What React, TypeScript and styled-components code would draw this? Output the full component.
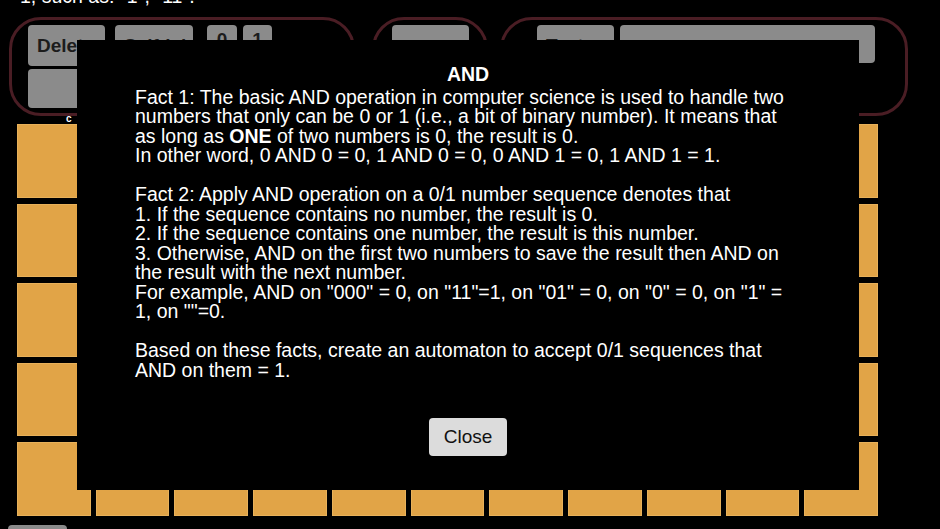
import React from "react";
import styled, { createGlobalStyle } from "styled-components";

const Global = createGlobalStyle`
  html, body {
    margin: 0;
    padding: 0;
    background: #000;
    overflow: hidden;
  }
  body {
    font-family: "Liberation Sans", Arial, Helvetica, sans-serif;
    color: #fff;
  }
`;

const Page = styled.div`
  width: 940px;
  height: 529px;
  overflow: hidden;
  position: relative;
  background: #000;
`;

const IntroRow = styled.div`
  display: flex;
  align-items: flex-end;
  margin-top: -14px;
  padding-left: 20px;
  height: 20px;
`;

const IntroText = styled.div`
  font-size: 19.5px;
  line-height: 19.5px;
  color: #fff;
  white-space: nowrap;
`;

const StubButton = styled.div`
  width: 40px;
  height: 20px;
  margin-left: 410px;
  margin-bottom: 14px;
  background: #8a8a8a;
  border-radius: 4px;
`;

const PanelRow = styled.div`
  display: flex;
  margin-top: 11px;
  padding-left: 9px;
  height: 99px;
`;

const Panel = styled.div<{ $w: number; $ml: number }>`
  box-sizing: border-box;
  width: ${(p) => p.$w}px;
  margin-left: ${(p) => p.$ml}px;
  height: 99px;
  border: 3px solid #4a1d24;
  border-radius: 32px;
  padding: 5px 0 0 ${(p) => (p.$ml === 0 ? 16 : 15)}px;
  display: flex;
  flex-direction: column;
  gap: 3px;
`;

const ButtonLine = styled.div`
  display: flex;
  gap: 8px;
`;

const GrayButton = styled.div<{ $w: number; $h: number; $ml?: number }>`
  width: ${(p) => p.$w}px;
  height: ${(p) => p.$h}px;
  margin-left: ${(p) => p.$ml ?? 0}px;
  background: #8b8b8b;
  border-radius: 4px;
  color: #1c1c1c;
  font-weight: bold;
  font-size: 19px;
  line-height: 19px;
  padding: 11px 0 0 9px;
  box-sizing: border-box;
  white-space: nowrap;
  overflow: hidden;
`;

const SmallButton = styled(GrayButton)`
  padding: 5px 0 0 0;
  text-align: center;
`;

const LabelRow = styled.div`
  height: 8px;
  padding-left: 66px;
  font-size: 10px;
  line-height: 6px;
  font-weight: bold;
  color: #fff;
`;

const Grid = styled.div`
  margin-left: 17px;
  width: 861px;
  display: grid;
  grid-template-columns: repeat(11, 1fr);
  grid-template-rows: repeat(5, 73.6px);
  column-gap: 5px;
  row-gap: 6px;
`;

const Cell = styled.div`
  background: #e1a447;
  box-shadow: inset 0 0 0 1px #e8b15a;
`;

const BottomStub = styled.div`
  margin: 9px 0 0 8px;
  width: 59px;
  height: 20px;
  background: #8b8b8b;
  border-radius: 4px;
`;

const Modal = styled.div`
  position: absolute;
  left: 77px;
  top: 40px;
  width: 782px;
  height: 450px;
  background: #000;
  box-sizing: border-box;
  padding: 25px 0 0 58px;
  display: flex;
  flex-direction: column;
`;

const Title = styled.div`
  width: 666px;
  text-align: center;
  font-weight: bold;
  font-size: 19.5px;
  line-height: 19.5px;
  margin-bottom: 3px;
  color: #fff;
`;

const Body = styled.div`
  font-size: 19.5px;
  line-height: 19.5px;
  color: #fff;
  white-space: nowrap;
`;

const Para = styled.div`
  margin-bottom: 19.5px;
`;

const CloseRow = styled.div`
  width: 666px;
  display: flex;
  justify-content: center;
  margin-top: 38px;
`;

const CloseButton = styled.button`
  width: 78px;
  height: 38px;
  background: #dcdcdc;
  border: none;
  border-radius: 4px;
  color: #111;
  font-family: "Liberation Sans", Arial, sans-serif;
  font-size: 19px;
  padding: 0;
`;

export default function App() {
  const cells = Array.from({ length: 55 });
  return (
    <Page>
      <Global />
      <IntroRow>
        <IntroText>1, such as: "1", "11".</IntroText>
        <StubButton />
      </IntroRow>
      <PanelRow>
        <Panel $w={346} $ml={0}>
          <ButtonLine>
            <GrayButton $w={77} $h={41}>Delete</GrayButton>
            <GrayButton $w={78} $h={41} $ml={2}>Self-label</GrayButton>
            <SmallButton $w={30} $h={30} $ml={6}>0</SmallButton>
            <SmallButton $w={29} $h={30} $ml={-2}>1</SmallButton>
          </ButtonLine>
          <GrayButton $w={140} $h={39} />
        </Panel>
        <Panel $w={116} $ml={17}>
          <ButtonLine>
            <GrayButton $w={77} $h={41} $ml={2} />
          </ButtonLine>
        </Panel>
        <Panel $w={408} $ml={12}>
          <ButtonLine>
            <GrayButton $w={77} $h={41} $ml={19}>Test</GrayButton>
            <GrayButton $w={255} $h={38} $ml={-2} />
          </ButtonLine>
        </Panel>
      </PanelRow>
      <LabelRow>c</LabelRow>
      <Grid>
        {cells.map((_, i) => (
          <Cell key={i} />
        ))}
      </Grid>
      <BottomStub />
      <Modal>
        <Title>AND</Title>
        <Body>
          <Para>
            Fact 1: The basic AND operation in computer science is used to handle two
            <br />
            numbers that only can be 0 or 1 (i.e., a bit of binary number). It means that
            <br />
            as long as <b>ONE</b> of two numbers is 0, the result is 0.
            <br />
            In other word, 0 AND 0 = 0, 1 AND 0 = 0, 0 AND 1 = 0, 1 AND 1 = 1.
          </Para>
          <Para>
            Fact 2: Apply AND operation on a 0/1 number sequence denotes that
            <br />
            1. If the sequence contains no number, the result is 0.
            <br />
            2. If the sequence contains one number, the result is this number.
            <br />
            3. Otherwise, AND on the first two numbers to save the result then AND on
            <br />
            the result with the next number.
            <br />
            For example, AND on "000" = 0, on "11"=1, on "01" = 0, on "0" = 0, on "1" =
            <br />
            1, on ""=0.
          </Para>
          <div>
            Based on these facts, create an automaton to accept 0/1 sequences that
            <br />
            AND on them = 1.
          </div>
        </Body>
        <CloseRow>
          <CloseButton>Close</CloseButton>
        </CloseRow>
      </Modal>
    </Page>
  );
}
